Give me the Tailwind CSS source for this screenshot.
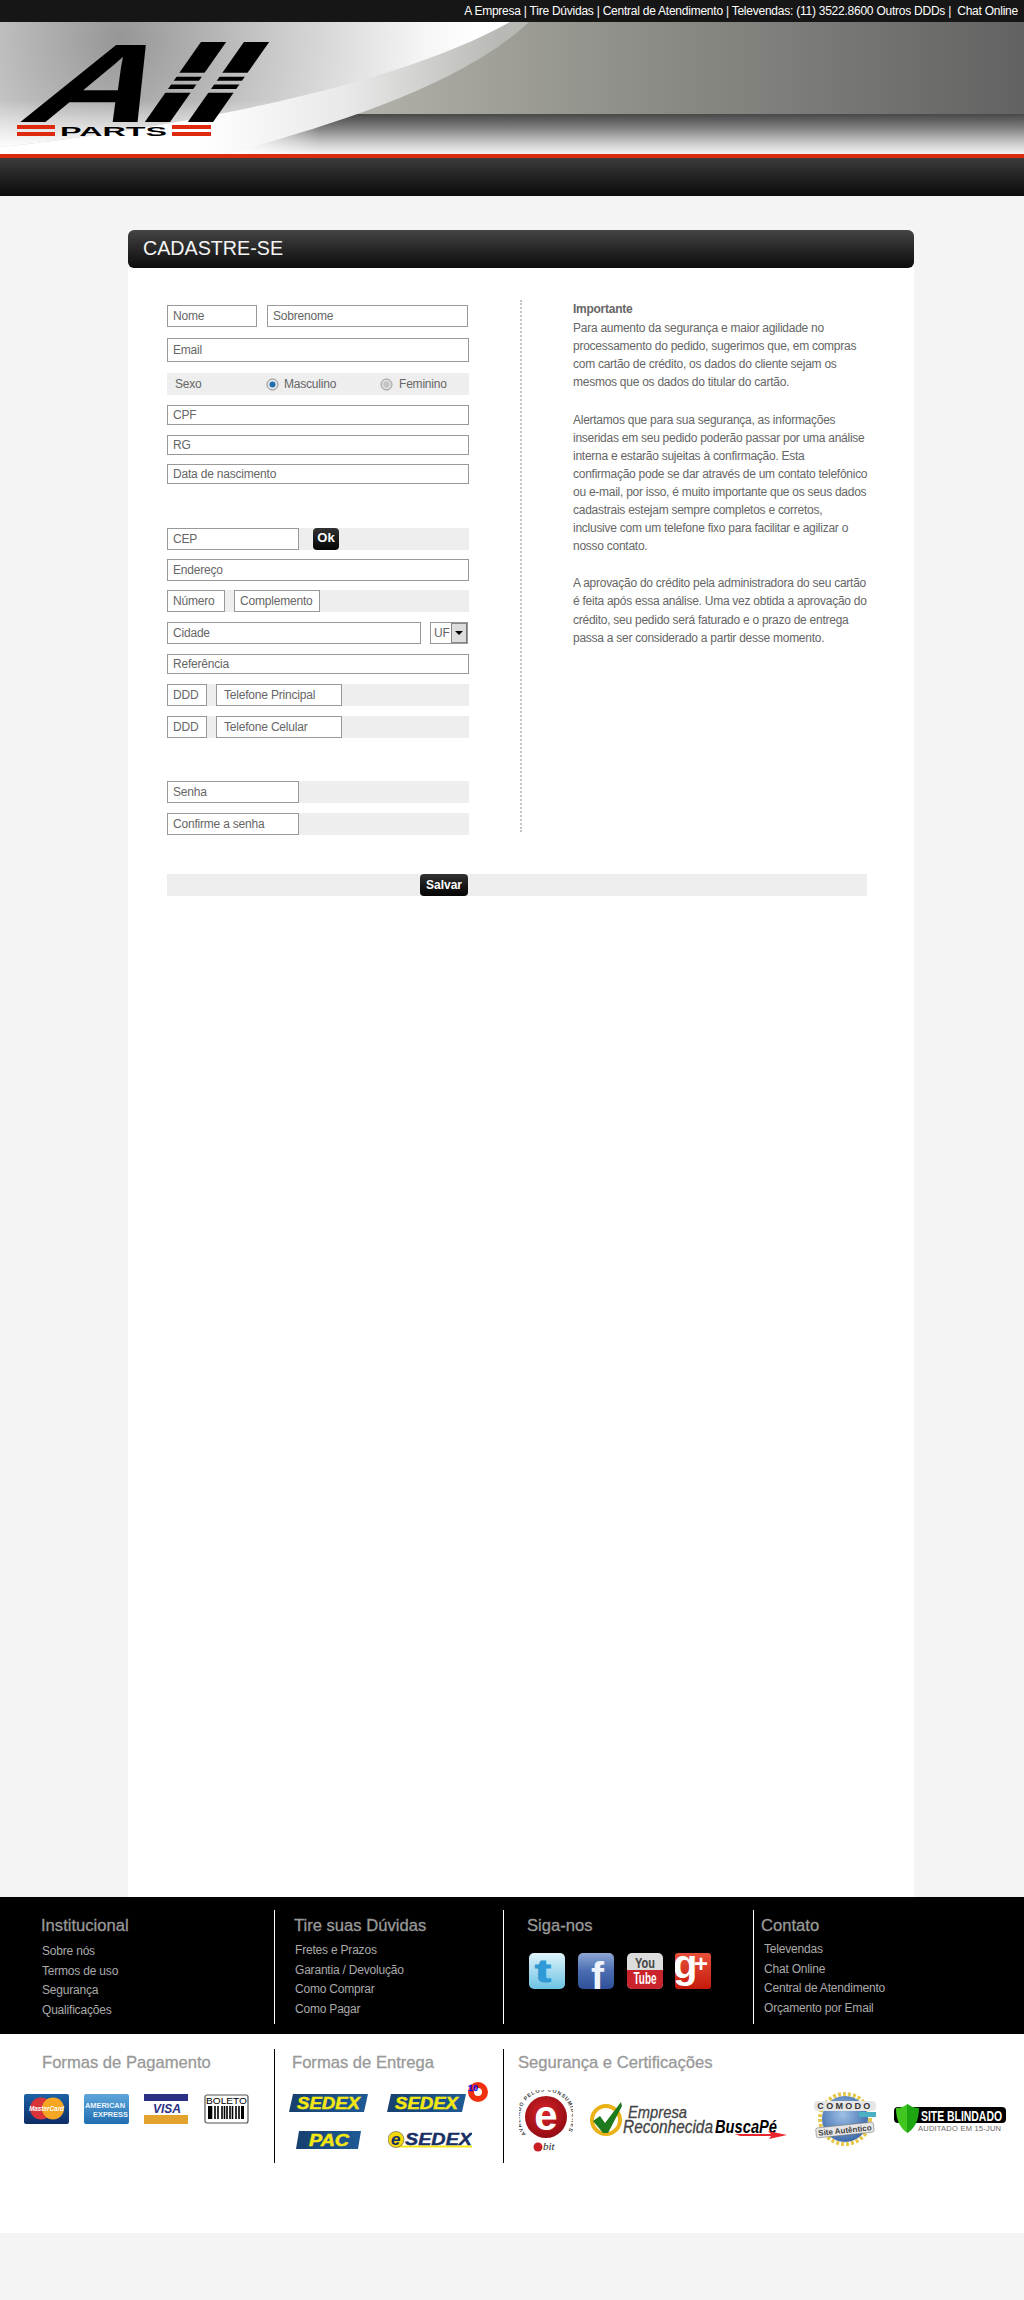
<!DOCTYPE html>
<html lang="pt-BR">
<head>
  <meta charset="UTF-8">
  <meta name="viewport" content="width=device-width, initial-scale=1.0">
  <title>Cadastre-se - All Parts</title>
  <script src="https://cdn.jsdelivr.net/npm/@tailwindcss/browser@4"></script>
</head>
<body class="bg-[#f4f4f4] font-['Liberation_Sans',Arial,sans-serif] text-[12px] text-[#666] min-h-[2300px]">

  <!-- top links -->
  <div class="h-[22px] bg-[#161616] text-white text-[12px] tracking-[-0.24px] leading-[22px] text-right pr-[6px] whitespace-pre">A Empresa | Tire Dúvidas | Central de Atendimento | Televendas: (11) 3522.8600 Outros DDDs |  Chat Online</div>

  <!-- banner + logo -->
  <svg class="block" width="1024" height="132" viewBox="0 22 1024 132" font-family="'Liberation Sans',Arial,sans-serif">
    <defs>
      <linearGradient id="greyH" gradientUnits="userSpaceOnUse" x1="370" y1="0" x2="1024" y2="0"><stop offset="0" stop-color="#b0b0a8"/><stop offset="0.4" stop-color="#8f8f89"/><stop offset="1" stop-color="#626262"/></linearGradient>
      <linearGradient id="greyV" x1="0" y1="0" x2="0" y2="1"><stop offset="0" stop-color="#484848"/><stop offset="0.3" stop-color="#777"/><stop offset="0.7" stop-color="#c4c4c4"/><stop offset="1" stop-color="#f4f4f4"/></linearGradient>
      <linearGradient id="fadeL" x1="0" y1="0" x2="1" y2="0"><stop offset="0" stop-color="#fff"/><stop offset="1" stop-color="#fff" stop-opacity="0"/></linearGradient>
      <linearGradient id="band" gradientUnits="userSpaceOnUse" x1="200" y1="0" x2="500" y2="0"><stop offset="0" stop-color="#fff"/><stop offset="0.5" stop-color="#e8e8e8"/><stop offset="1" stop-color="#b8b8b4"/></linearGradient>
      <radialGradient id="lightR" gradientUnits="userSpaceOnUse" cx="120" cy="38" r="360"><stop offset="0" stop-color="#969696"/><stop offset="0.4" stop-color="#c6c6c6"/><stop offset="0.85" stop-color="#f6f6f6"/><stop offset="1" stop-color="#fff"/></radialGradient>
      <linearGradient id="lightV" gradientUnits="userSpaceOnUse" x1="0" y1="100" x2="0" y2="148"><stop offset="0" stop-color="#fff" stop-opacity="0"/><stop offset="1" stop-color="#fff"/></linearGradient>
      <clipPath id="stripes"><rect x="130" y="42" width="160" height="30.7"/><rect x="130" y="76.7" width="160" height="4"/><rect x="130" y="84.5" width="160" height="4.5"/><rect x="130" y="92.7" width="160" height="29.300"/></clipPath>
    </defs>
    <rect x="0" y="22" width="1024" height="92" fill="url(#greyH)"/>
    <rect x="0" y="114" width="1024" height="40" fill="url(#greyV)"/>
    <rect x="230" y="114" width="90" height="40" fill="url(#fadeL)"/>
    <path d="M0 154 L229 154 C300 132 450 95 529 22 L0 22 Z" fill="url(#band)"/>
    <path d="M0 147 C130 133 380 95 510 22 L0 22 Z" fill="url(#lightR)"/>
    <path d="M0 147 C130 133 380 95 510 22 L0 22 Z" fill="url(#lightV)"/>
    <text transform="translate(16,122) skewX(-34) scale(1.56,1)" font-size="112" font-weight="700" fill="#000">A</text>
    <g clip-path="url(#stripes)">
      <text transform="translate(132,122) skewX(-35) scale(1.6,1)" font-size="115" font-weight="700" fill="#000">l</text>
      <text transform="translate(175,122) skewX(-35) scale(1.6,1)" font-size="115" font-weight="700" fill="#000">l</text>
    </g>
    <rect x="17" y="125" width="38" height="4" fill="#dd2a0e"/><rect x="17" y="132" width="38" height="4" fill="#dd2a0e"/>
    <rect x="172" y="125" width="39" height="4" fill="#dd2a0e"/><rect x="172" y="132" width="39" height="4" fill="#dd2a0e"/>
    <text x="60" y="136" font-size="12.5" font-weight="700" fill="#000" textLength="107" lengthAdjust="spacingAndGlyphs">PARTS</text>
  </svg>
  <div class="h-[4px] bg-[#dc2a0c]"></div>
  <div class="h-[38px] bg-gradient-to-b from-[#3c3c3c] to-[#0b0b0b]"></div>

  <!-- main card -->
  <main class="ml-[128px] mt-[34px] w-[786px] h-[1667px] bg-white">
    <h1 class="h-[38px] rounded-[6px] bg-gradient-to-b from-[#454545] to-[#0c0c0c] text-[#f4f4f4] text-[19.7px] leading-[36px] pl-[15px]">CADASTRE-SE</h1>

    <div class="flex h-[567px]">
      <form class="ml-[39px] w-[302px] pt-[37px] tracking-[-0.2px]">
        <div class="flex justify-between pr-px">
          <div class="w-[90px] h-[22px] border border-[#999] bg-white flex items-center pl-[5px]">Nome</div>
          <div class="w-[201px] h-[22px] border border-[#999] bg-white flex items-center pl-[5px]">Sobrenome</div>
        </div>
        <div class="mt-[11px] h-[24px] border border-[#999] bg-white flex items-center pl-[5px]">Email</div>
        <div class="mt-[11px] h-[22px] bg-[#eee] flex items-center">
          <span class="ml-[8px] w-[91px]">Sexo</span>
          <svg width="13" height="13" viewBox="0 0 13 13"><circle cx="6.5" cy="6.5" r="5.5" fill="#e8e8e8" stroke="#8a8a8a"/><circle cx="6.5" cy="6.5" r="3" fill="#1f6fb0"/></svg>
          <span class="ml-[5px] w-[96px]">Masculino</span>
          <svg width="13" height="13" viewBox="0 0 13 13"><circle cx="6.5" cy="6.5" r="5.5" fill="#dcdcdc" stroke="#999"/><circle cx="6.5" cy="6.5" r="3" fill="#c4c4c4"/></svg>
          <span class="ml-[6px]">Feminino</span>
        </div>
        <div class="mt-[10px] h-[20px] border border-[#999] bg-white flex items-center pl-[5px]">CPF</div>
        <div class="mt-[10px] h-[20px] border border-[#999] bg-white flex items-center pl-[5px]">RG</div>
        <div class="mt-[9px] h-[20px] border border-[#999] bg-white flex items-center pl-[5px]">Data de nascimento</div>

        <div class="mt-[44px] h-[22px] bg-[#eee] flex">
          <div class="w-[132px] border border-[#999] bg-white flex items-center pl-[5px]">CEP</div>
          <button type="button" class="ml-[14px] w-[26px] rounded-[4px] bg-gradient-to-b from-[#333] to-[#050505] text-white text-[13px] tracking-normal font-bold leading-[18px] pb-[3px]">Ok</button>
        </div>
        <div class="mt-[9px] h-[22px] border border-[#999] bg-white flex items-center pl-[5px]">Endereço</div>
        <div class="mt-[9px] h-[22px] bg-[#eee] flex">
          <div class="w-[58px] border border-[#999] bg-white flex items-center pl-[5px]">Número</div>
          <div class="ml-[9px] w-[86px] border border-[#999] bg-white flex items-center pl-[5px]">Complemento</div>
        </div>
        <div class="mt-[10px] h-[22px] flex">
          <div class="w-[254px] border border-[#999] bg-white flex items-center pl-[5px]">Cidade</div>
          <div class="ml-[9px] w-[38px] border border-[#999] bg-white flex items-center justify-between pl-[3px]">
            UF
            <span class="w-[16px] h-full bg-[#ddd] border border-[#888] border-r-[#777] flex items-center justify-center"><span class="w-0 h-0 border-x-[4px] border-x-transparent border-t-[4px] border-t-black"></span></span>
          </div>
        </div>
        <div class="mt-[10px] h-[20px] border border-[#999] bg-white flex items-center pl-[5px]">Referência</div>
        <div class="mt-[10px] h-[22px] bg-[#eee] flex">
          <div class="w-[40px] border border-[#999] bg-white flex items-center pl-[5px]">DDD</div>
          <div class="ml-[9px] w-[126px] border border-[#999] bg-white flex items-center pl-[7px]">Telefone Principal</div>
        </div>
        <div class="mt-[10px] h-[22px] bg-[#eee] flex">
          <div class="w-[40px] border border-[#999] bg-white flex items-center pl-[5px]">DDD</div>
          <div class="ml-[9px] w-[126px] border border-[#999] bg-white flex items-center pl-[7px]">Telefone Celular</div>
        </div>

        <div class="mt-[43px] h-[22px] bg-[#eee] flex">
          <div class="w-[132px] border border-[#999] bg-white flex items-center pl-[5px]">Senha</div>
        </div>
        <div class="mt-[10px] h-[22px] bg-[#eee] flex">
          <div class="w-[132px] border border-[#999] bg-white flex items-center pl-[5px]">Confirme a senha</div>
        </div>
      </form>

      <div class="ml-[51px] mt-[32px] h-[532px] w-0 border-l-2 border-dotted border-[#c4c4c4]"></div>

      <div class="ml-[51px] pt-[32px] text-[12px] tracking-[-0.26px] leading-[18px] text-[#666] whitespace-nowrap">
        <p class="font-bold h-[19px]">Importante</p>
        <p>Para aumento da segurança e maior agilidade no<br>processamento do pedido, sugerimos que, em compras<br>com cartão de crédito, os dados do cliente sejam os<br>mesmos que os dados do titular do cartão.</p>
        <p class="mt-[20px]">Alertamos que para sua segurança, as informações<br>inseridas em seu pedido poderão passar por uma análise<br>interna e estarão sujeitas à confirmação. Esta<br>confirmação pode se dar através de um contato telefônico<br>ou e-mail, por isso, é muito importante que os seus dados<br>cadastrais estejam sempre completos e corretos,<br>inclusive com um telefone fixo para facilitar e agilizar o<br>nosso contato.</p>
        <p class="mt-[19px] leading-[18.4px]">A aprovação do crédito pela administradora do seu cartão<br>é feita após essa análise. Uma vez obtida a aprovação do<br>crédito, seu pedido será faturado e o prazo de entrega<br>passa a ser considerado a partir desse momento.</p>
      </div>
    </div>

    <div class="ml-[39px] mt-[39px] w-[700px] h-[22px] bg-[#eee] pl-[253px]">
      <button type="button" class="w-[48px] h-[22px] block rounded-[4px] bg-gradient-to-b from-[#333] to-[#050505] text-white text-[12px] font-bold leading-[20px] pb-[1px]">Salvar</button>
    </div>
  </main>

  <!-- footer links -->
  <footer class="h-[137px] bg-black text-[#aaa] flex items-start pt-[13px]">
    <div class="w-[274px] h-[114px] pl-[41px] pt-[6px]">
      <h3 class="text-[16.6px] leading-[20px] text-[#999] [-webkit-text-stroke:0.3px_#999]">Institucional</h3>
      <ul class="mt-[6px] ml-px leading-[19.5px] tracking-[-0.2px]">
        <li>Sobre nós</li>
        <li>Termos de uso</li>
        <li>Segurança</li>
        <li>Qualificações</li>
      </ul>
    </div>
    <div class="w-[229px] h-[114px] border-l border-white pl-[19px] pt-[6px]">
      <h3 class="text-[16.6px] leading-[20px] text-[#999] [-webkit-text-stroke:0.3px_#999]">Tire suas Dúvidas</h3>
      <ul class="mt-[5px] ml-[1px] leading-[19.5px] tracking-[-0.2px]">
        <li>Fretes e Prazos</li>
        <li>Garantia / Devolução</li>
        <li>Como Comprar</li>
        <li>Como Pagar</li>
      </ul>
    </div>
    <div class="w-[250px] h-[114px] border-l border-white pl-[23px] pt-[6px]">
      <h3 class="text-[16.6px] leading-[20px] text-[#999] [-webkit-text-stroke:0.3px_#999]">Siga-nos</h3>
      <div class="mt-[17px] ml-[2px] flex gap-[13px]">
        <svg width="36" height="36" viewBox="0 0 36 36" font-family="'Liberation Sans',Arial,sans-serif">
          <defs><linearGradient id="tw" x1="0" y1="0" x2="0" y2="1"><stop offset="0" stop-color="#dff3fa"/><stop offset="1" stop-color="#6cc3e4"/></linearGradient></defs>
          <rect width="36" height="36" rx="5" fill="url(#tw)"/>
          <text transform="translate(6,29) scale(1.5,1)" font-size="32" font-weight="700" fill="#2f9ad6" stroke="#2f9ad6" stroke-width="1">t</text>
        </svg>
        <svg width="36" height="36" viewBox="0 0 36 36" font-family="'Liberation Sans',Arial,sans-serif">
          <defs><linearGradient id="fb" x1="0" y1="0" x2="0" y2="1"><stop offset="0" stop-color="#8ea8d6"/><stop offset="0.5" stop-color="#4a6cb0"/><stop offset="1" stop-color="#2f5199"/></linearGradient></defs>
          <rect width="36" height="36" rx="5" fill="url(#fb)"/>
          <text x="13" y="36" font-size="39" font-weight="700" fill="#eef2fa">f</text>
        </svg>
        <svg width="36" height="36" viewBox="0 0 36 36" font-family="'Liberation Sans',Arial,sans-serif">
          <rect width="36" height="36" rx="5" fill="#dcdcdc"/>
          <path d="M0 17 H36 V31 a5 5 0 0 1 -5 5 H5 a5 5 0 0 1 -5 -5 Z" fill="#c9242b"/>
          <text x="18" y="15" text-anchor="middle" font-size="15" font-weight="700" fill="#444" textLength="20" lengthAdjust="spacingAndGlyphs">You</text>
          <text x="18" y="31" text-anchor="middle" font-size="16" font-weight="700" fill="#fff" textLength="23" lengthAdjust="spacingAndGlyphs">Tube</text>
        </svg>
        <svg width="36" height="36" viewBox="0 0 36 36" font-family="'Liberation Sans',Arial,sans-serif" class="-ml-px">
          <defs><linearGradient id="gp" x1="0" y1="0" x2="0" y2="1"><stop offset="0" stop-color="#e8503a"/><stop offset="1" stop-color="#c51a0c"/></linearGradient></defs>
          <rect width="36" height="36" rx="3" fill="url(#gp)"/>
          <text x="-2" y="25" font-size="40" font-weight="700" fill="#fff">g</text>
          <text x="19" y="19" font-size="24" font-weight="700" fill="#fff">+</text>
        </svg>
      </div>
    </div>
    <div class="h-[114px] border-l border-white pl-[7px] pt-[6px]">
      <h3 class="text-[16.6px] leading-[20px] text-[#999] [-webkit-text-stroke:0.3px_#999]">Contato</h3>
      <ul class="mt-[4px] ml-[3px] leading-[19.5px] tracking-[-0.2px]">
        <li>Televendas</li>
        <li>Chat Online</li>
        <li>Central de Atendimento</li>
        <li>Orçamento por Email</li>
      </ul>
    </div>
  </footer>

  <!-- payment, delivery, certificates -->
  <section class="h-[199px] bg-white flex items-start pt-[15px]">
    <div class="w-[274px] h-[114px] pt-[4px]">
      <h3 class="ml-[42px] text-[16.6px] leading-[20px] text-[#999] [-webkit-text-stroke:0.3px_#999]">Formas de Pagamento</h3>
      <div class="ml-[24px] mt-[21px] flex gap-[15px]">
        <svg width="45" height="30" viewBox="0 0 45 30" font-family="'Liberation Sans',Arial,sans-serif">
          <defs><linearGradient id="mc" x1="0" y1="0" x2="0" y2="1"><stop offset="0" stop-color="#1c62a8"/><stop offset="1" stop-color="#0d2c66"/></linearGradient></defs>
          <rect width="45" height="30" rx="2" fill="url(#mc)"/>
          <circle cx="17" cy="14.5" r="11" fill="#d9343a"/><circle cx="29" cy="14.5" r="11" fill="#f5a623"/>
          <text x="22.5" y="17" text-anchor="middle" font-size="8" font-weight="700" font-style="italic" fill="#fff" textLength="35" lengthAdjust="spacingAndGlyphs">MasterCard</text>
        </svg>
        <svg width="45" height="30" viewBox="0 0 45 30" font-family="'Liberation Sans',Arial,sans-serif">
          <defs><linearGradient id="ax" x1="0" y1="0" x2="0" y2="1"><stop offset="0" stop-color="#5ea6dc"/><stop offset="1" stop-color="#1f6db0"/></linearGradient></defs>
          <rect width="45" height="30" rx="2" fill="url(#ax)"/>
          <text x="1" y="14" font-size="8" font-weight="700" fill="#eaf4fb" textLength="40" lengthAdjust="spacingAndGlyphs">AMERICAN</text>
          <text x="9" y="23" font-size="8" font-weight="700" fill="#eaf4fb" textLength="35" lengthAdjust="spacingAndGlyphs">EXPRESS</text>
        </svg>
        <svg width="45" height="30" viewBox="0 0 45 30" font-family="'Liberation Sans',Arial,sans-serif">
          <rect width="44" height="30" rx="1" fill="#fff"/><rect width="44" height="7" fill="#2b2f85"/><rect y="21" width="44" height="9" fill="#e2a32f"/>
          <text x="9" y="19" font-size="13" font-weight="700" font-style="italic" fill="#2b2f85" textLength="28" lengthAdjust="spacingAndGlyphs">VISA</text>
        </svg>
        <svg width="46" height="31" viewBox="0 0 46 31" font-family="'Liberation Sans',Arial,sans-serif">
          <rect x="1" y="1" width="43" height="28" rx="2" fill="#fff" stroke="#555" stroke-width="1.2"/>
          <text x="2" y="10" font-size="9.5" fill="#000" textLength="41" lengthAdjust="spacingAndGlyphs">BOLETO</text>
          <path d="M5 12v13 M7.5 12v13 M11 12v13 M14 12v13 M18 12v13 M20.500 12v13 M23 12v13 M26 12v13 M28.500 12v13 M32 12v13 M35 12v13 M38 12v13" stroke="#000" stroke-width="1.6"/>
          <rect x="4" y="12" width="3" height="13"/><rect x="37" y="12" width="3" height="13"/>
        </svg>
      </div>
    </div>
    <div class="w-[229px] h-[114px] border-l border-black pt-[4px]">
      <h3 class="ml-[17px] text-[16.6px] leading-[20px] text-[#999] [-webkit-text-stroke:0.3px_#999]">Formas de Entrega</h3>
      <div class="ml-[14px] mt-[9px] flex items-end gap-[19px]">
        <svg width="79" height="18" viewBox="0 0 79 18" font-family="'Liberation Sans',Arial,sans-serif">
          <defs><linearGradient id="sx" x1="0" y1="0" x2="1" y2="0"><stop offset="0" stop-color="#16406f"/><stop offset="1" stop-color="#1f5a95"/></linearGradient></defs>
          <polygon points="4,0 79,0 75,18 0,18" fill="url(#sx)"/>
          <text x="8" y="15" font-size="17" font-weight="700" font-style="italic" fill="#f4e713" stroke="#f4e713" stroke-width="0.5" textLength="63" lengthAdjust="spacingAndGlyphs">SEDEX</text>
        </svg>
        <svg width="102" height="30" viewBox="0 0 102 30" font-family="'Liberation Sans',Arial,sans-serif">
          <polygon points="4,12 79,12 75,30 0,30" fill="url(#sx)"/>
          <text x="8" y="27" font-size="17" font-weight="700" font-style="italic" fill="#f4e713" stroke="#f4e713" stroke-width="0.5" textLength="63" lengthAdjust="spacingAndGlyphs">SEDEX</text>
          <circle cx="91" cy="10" r="7" fill="#fff" stroke="#f0300f" stroke-width="6"/>
          <text x="81" y="9" font-size="9" font-weight="700" fill="#1414e0" stroke="#1414e0" stroke-width="0.3">10</text>
        </svg>
      </div>
      <div class="ml-[21px] mt-[19px] flex items-start gap-[27px]">
        <svg width="65" height="18" viewBox="0 0 65 18" font-family="'Liberation Sans',Arial,sans-serif">
          <polygon points="3,0 65,0 62,18 0,18" fill="url(#sx)"/>
          <text x="13" y="15" font-size="17" font-weight="700" font-style="italic" fill="#f4e713" stroke="#f4e713" stroke-width="0.5" textLength="40" lengthAdjust="spacingAndGlyphs">PAC</text>
        </svg>
        <svg width="84" height="18" viewBox="0 0 84 18" font-family="'Liberation Sans',Arial,sans-serif">
          <rect x="10" y="14.500" width="74" height="2" fill="#f4e713"/>
          <circle cx="8" cy="8.500" r="8" fill="#f4d90f" stroke="#555" stroke-width="0.6"/>
          <text x="3" y="14" font-size="17" font-weight="700" font-style="italic" fill="#1a2f63">e</text>
          <text x="17" y="14" font-size="17" font-weight="700" font-style="italic" fill="#1a2f63" stroke="#1a2f63" stroke-width="0.4" textLength="67" lengthAdjust="spacingAndGlyphs">SEDEX</text>
        </svg>
      </div>
    </div>
    <div class="h-[114px] border-l border-black pt-[4px]">
      <h3 class="ml-[14px] text-[16.6px] leading-[20px] text-[#999] [-webkit-text-stroke:0.3px_#999]">Segurança e Certificações</h3>
      <div class="ml-[15px] mt-[17px] flex items-start">
        <svg width="54" height="62" viewBox="0 0 54 62" font-family="'Liberation Sans',Arial,sans-serif">
          <defs>
            <radialGradient id="eb" cx="0.45" cy="0.4" r="0.65"><stop offset="0" stop-color="#d8242a"/><stop offset="1" stop-color="#8e0a10"/></radialGradient>
            <path id="ebring" d="M7 44 A26 26 0 1 1 47 44"/>
          </defs>
          <circle cx="27" cy="27" r="21" fill="url(#eb)"/>
          <text x="27" y="40" text-anchor="middle" font-size="42" font-weight="700" fill="#fff">e</text>
          <text font-size="5.300" font-weight="700" fill="#444" letter-spacing="0.8"><textPath href="#ebring">AVALIADO PELOS CONSUMIDORES</textPath></text>
          <circle cx="19" cy="57" r="4.500" fill="#c81e24"/>
          <text x="24" y="60" font-size="11" font-style="italic" font-family="'Liberation Serif',serif" fill="#222">bit</text>
        </svg>
        <svg class="ml-[17px] mt-[12px]" width="197" height="38" viewBox="0 0 197 38" font-family="'Liberation Sans',Arial,sans-serif">
          <circle cx="16" cy="18" r="14" fill="#fff" stroke="#eab118" stroke-width="4"/>
          <polygon points="3,19 10,14 15,21 31,0 32,4 18,31 13,31" fill="#1d7a1d"/>
          <text x="38" y="16" font-size="17" font-style="italic" fill="#444" stroke="#444" stroke-width="0.3" textLength="59" lengthAdjust="spacingAndGlyphs">Empresa</text>
          <text x="33" y="31" font-size="18" font-style="italic" fill="#444" stroke="#444" stroke-width="0.3" textLength="90" lengthAdjust="spacingAndGlyphs">Reconhecida</text>
          <text x="125" y="31" font-size="18" font-weight="700" font-style="italic" fill="#000" textLength="62" lengthAdjust="spacingAndGlyphs">BuscaPé</text>
          <polygon points="145,32 181,32 178,29 197,33 179,37 181,34 150,34" fill="#e8262c"/>
        </svg>
        <svg class="ml-[26px] mt-px" width="64" height="56" viewBox="0 0 64 56" font-family="'Liberation Sans',Arial,sans-serif">
          <defs><radialGradient id="cg" cx="0.45" cy="0.4" r="0.7"><stop offset="0" stop-color="#9ec0e6"/><stop offset="1" stop-color="#2e5da0"/></radialGradient></defs>
          <circle cx="32" cy="28" r="25" fill="none" stroke="#e5c84a" stroke-width="4" stroke-dasharray="3 2"/>
          <circle cx="32" cy="28" r="23" fill="url(#cg)"/>
          <rect x="1" y="10" width="62" height="10" rx="4" fill="#e6e6e6"/>
          <text x="32" y="18" text-anchor="middle" font-size="9" font-weight="700" fill="#333" letter-spacing="2.300">COMODO</text>
          <rect x="46" y="21" width="17" height="5" fill="#4bb0c4"/>
          <g transform="rotate(-6 32 40)"><rect x="3" y="34" width="58" height="10" rx="2" fill="#e6e6e6" stroke="#666" stroke-width="0.5"/>
          <text x="32" y="42" text-anchor="middle" font-size="8" font-weight="700" fill="#444">Site Autêntico</text></g>
        </svg>
        <svg class="ml-[17px] mt-[14px]" width="112" height="29" viewBox="0 0 112 29" font-family="'Liberation Sans',Arial,sans-serif">
          <defs><linearGradient id="sh" x1="0" y1="0" x2="1" y2="0"><stop offset="0.5" stop-color="#3fc61f"/><stop offset="0.5" stop-color="#1ea512"/></linearGradient></defs>
          <rect y="3" width="112" height="16" rx="4" fill="#000"/>
          <path d="M13.500 0 C18 3 21 4 25 4 C25 16 21 24 13.500 29 C6 24 2 16 2 4 C6 4 9 3 13.500 0 Z" fill="url(#sh)"/>
          <text x="27" y="16.500" font-size="14" font-weight="700" fill="#fff" textLength="81" lengthAdjust="spacingAndGlyphs">SITE BLINDADO</text>
          <text x="24" y="27" font-size="7.500" fill="#666" textLength="83">AUDITADO EM 15-JUN</text>
        </svg>
      </div>
    </div>
  </section>
</body>
</html>
